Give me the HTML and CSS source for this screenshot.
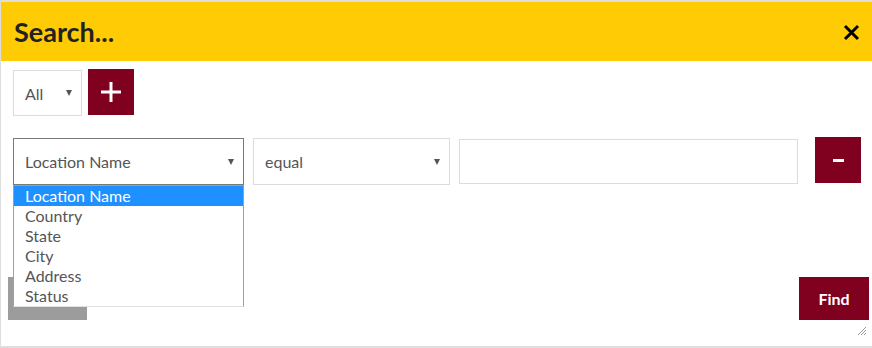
FILE: index.html
```html
<!DOCTYPE html>
<html lang="en">
<head>
    <meta charset="UTF-8">
    <meta name="viewport" content="width=device-width, initial-scale=1.0">
    <title>Search</title>
    <link rel="stylesheet" href="styles.css">
</head>
<body>
    <div class="dialog">
        <div class="dialog-header">
            <h2 class="dialog-title">Search...</h2>
            <button class="close-btn" aria-label="Close">
                <svg width="17" height="17" viewBox="0 0 17 17">
                    <path d="M2 2 L15 15 M15 2 L2 15" stroke="#000" stroke-width="3" fill="none"/>
                </svg>
            </button>
        </div>

        <div class="dialog-body">
            <div class="row row-top">
                <div class="select select-all"><span>All</span><span class="caret"></span></div>
                <button class="btn-square btn-plus" aria-label="Add">
                    <svg width="20" height="20" viewBox="0 0 20 20">
                        <path d="M10 0 V20 M0 10 H20" stroke="#fff" stroke-width="3" fill="none"/>
                    </svg>
                </button>
            </div>

            <div class="row row-filter">
                <div class="select select-field is-open">
                    <span>Location Name</span><span class="caret"></span>
                    <ul class="dropdown">
                        <li class="selected">Location Name</li>
                        <li>Country</li>
                        <li>State</li>
                        <li>City</li>
                        <li>Address</li>
                        <li>Status</li>
                    </ul>
                </div>
                <div class="select select-op"><span>equal</span><span class="caret"></span></div>
                <input class="value-input" type="text">
                <button class="btn-square btn-minus" aria-label="Remove">
                    <svg width="11" height="3" viewBox="0 0 11 3">
                        <rect width="11" height="3" fill="#fff"/>
                    </svg>
                </button>
            </div>
        </div>

        <div class="dialog-footer">
            <button class="btn-gray"></button>
            <button class="btn-find">Find</button>
        </div>

        <svg class="grip" width="10" height="10" viewBox="0 0 10 10">
            <path d="M9 1 L1 9 M9 4 L4 9 M9 7 L7 9" stroke="#999" stroke-width="1" fill="none"/>
        </svg>
    </div>
</body>
</html>
```

FILE: styles.css
```css
body {
    margin: 0;
    background-color: #dedede;
    font-family: Lato, "Open Sans", sans-serif;
    overflow: hidden;
}
.dialog {
    position: relative;
    display: flex;
    flex-direction: column;
    width: 871px;
    height: 344px;
    margin: 2px 0 0 1px;
    background-color: #fff;
}
.dialog-header {
    display: flex;
    justify-content: space-between;
    align-items: center;
    height: 59px;
    padding: 0 12px 0 13px;
    background-color: #ffcb05;
}
.dialog-title {
    margin: 0;
    font-size: 27px;
    font-weight: bold;
    color: #222;
}
.close-btn {
    display: flex;
    padding: 0;
    border: none;
    background: none;
    margin-top: 2px;
}
.dialog-body {
    padding: 8px 0 0 12px;
}
.row {
    display: flex;
    align-items: flex-start;
}
.row-top {
    gap: 6px;
}
.row-filter {
    margin-top: 21px;
}
.select {
    position: relative;
    box-sizing: border-box;
    display: flex;
    justify-content: space-between;
    align-items: center;
    height: 47px;
    padding: 0 9px 0 11px;
    border: 1px solid #dcdcdc;
    font-size: 16px;
    color: #555;
}
.caret {
    width: 0;
    height: 0;
    border-left: 3px solid transparent;
    border-right: 3px solid transparent;
    border-top: 6px solid #555;
}
.select-all {
    width: 69px;
    height: 46px;
    margin-top: 1px;
}
.select-field {
    width: 231px;
    margin-top: 1px;
    border-color: #7a7a7a;
}
.select-op {
    width: 197px;
    margin: 1px 0 0 9px;
}
.value-input {
    box-sizing: border-box;
    width: 339px;
    height: 45px;
    margin: 2px 0 0 9px;
    border: 1px solid #dcdcdc;
    outline: none;
}
.btn-square {
    display: flex;
    justify-content: center;
    align-items: center;
    width: 46px;
    height: 46px;
    padding: 0;
    border: none;
    background-color: #80001f;
}
.btn-minus {
    margin-left: 17px;
}
.dropdown {
    position: absolute;
    top: 46px;
    left: -1px;
    z-index: 2;
    box-sizing: border-box;
    width: 231px;
    margin: 0;
    padding: 0;
    list-style: none;
    background-color: #fff;
    border: 1px solid #8aa3cc;
    border-bottom-color: #e0e0e0;
}
.dropdown li {
    height: 20px;
    padding-left: 11px;
    line-height: 20px;
    font-size: 16px;
    color: #555;
}
.dropdown li.selected {
    background-color: #1e90ff;
    color: #fff;
}
.dialog-footer {
    display: flex;
    justify-content: space-between;
    margin-top: auto;
    padding: 0 3px 26px 7px;
}
.btn-gray {
    width: 79px;
    height: 43px;
    border: none;
    background-color: #9c9c9c;
}
.btn-find {
    width: 70px;
    height: 43px;
    border: none;
    background-color: #80001f;
    color: #fff;
    font-family: Lato, sans-serif;
    font-size: 16px;
    font-weight: bold;
}
.grip {
    position: absolute;
    right: 5px;
    bottom: 10px;
}
```
